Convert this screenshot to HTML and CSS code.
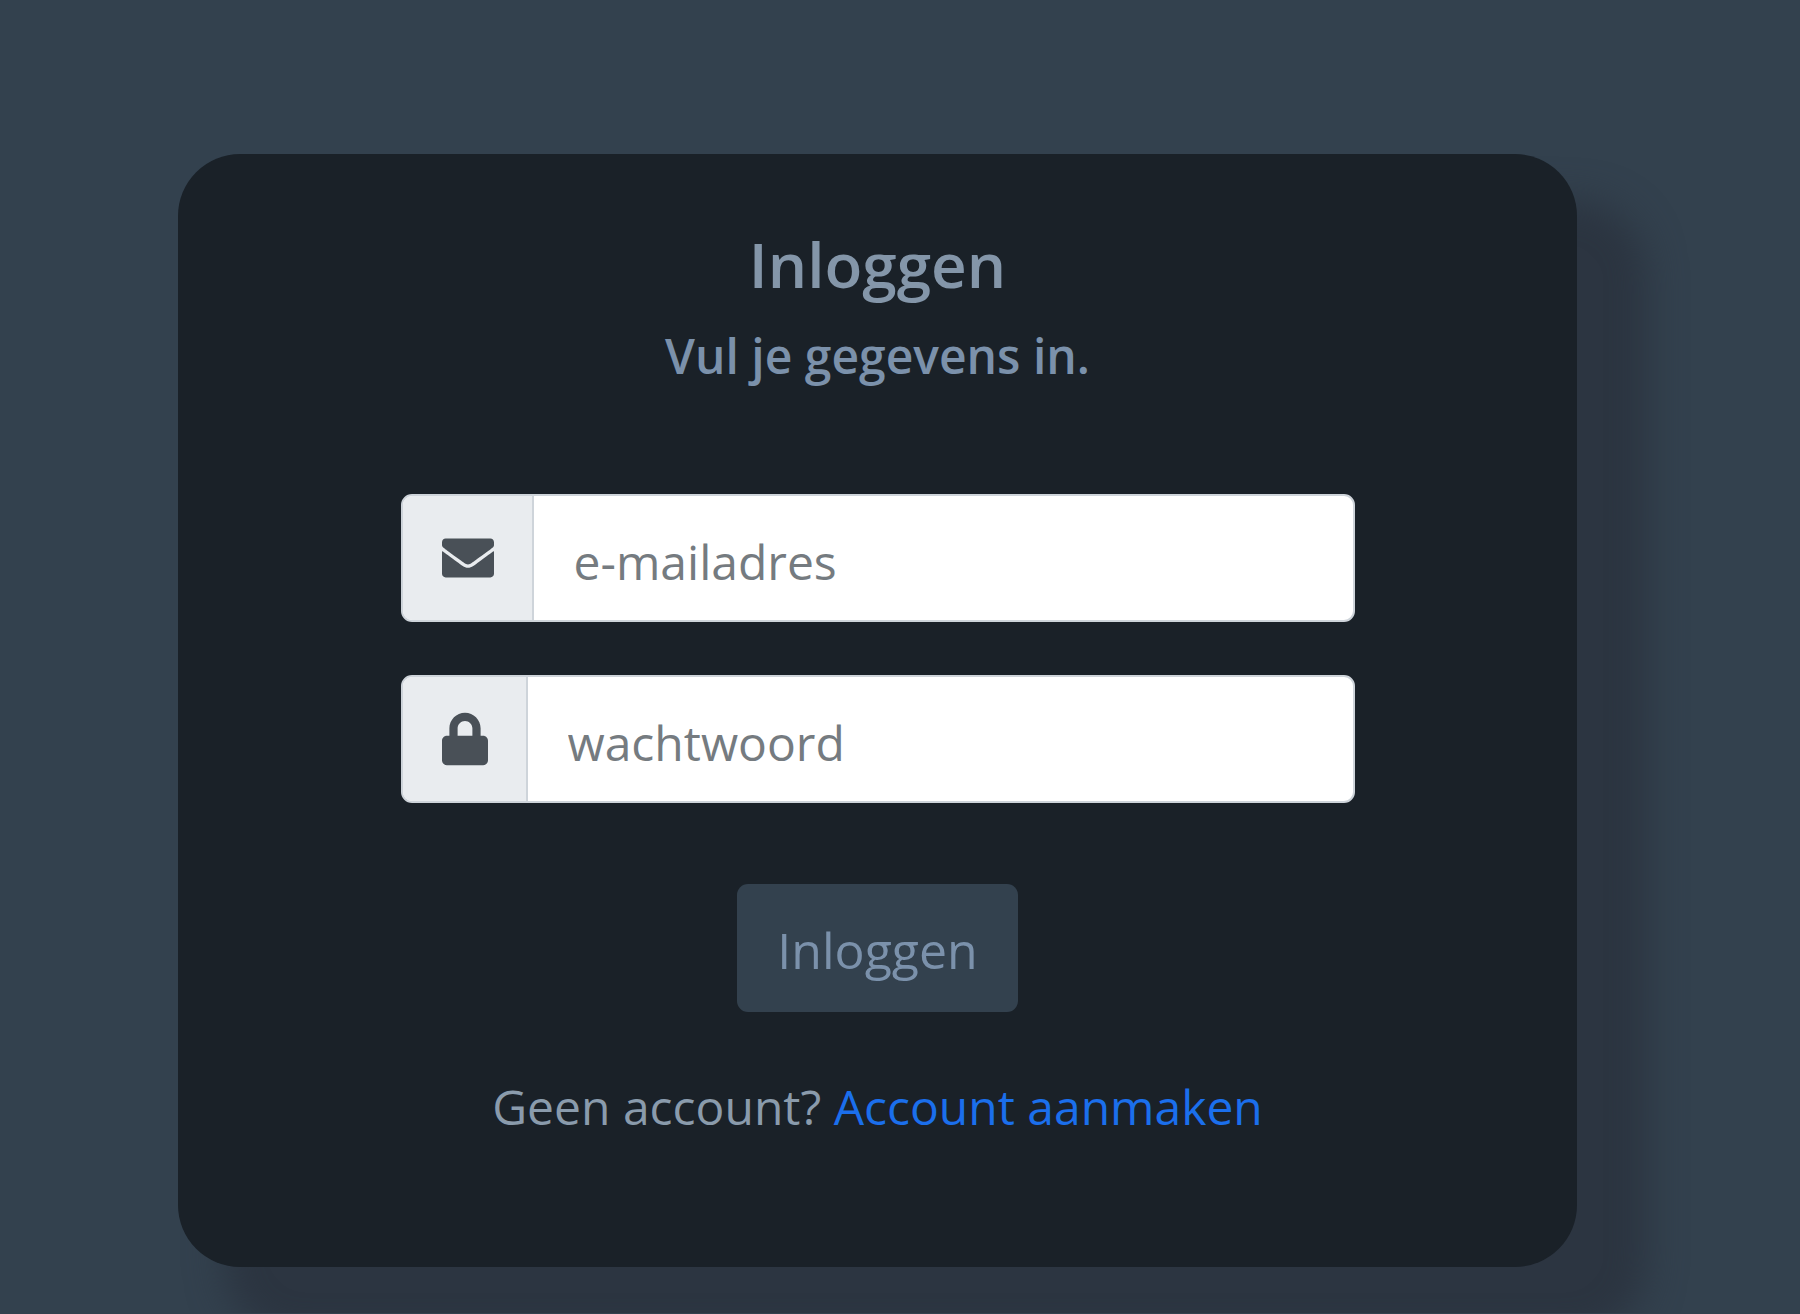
FILE: index.html
```html
<!DOCTYPE html>
<html lang="nl">
<head>
<meta charset="utf-8">
<meta name="viewport" content="width=device-width, initial-scale=1">
<title>Inloggen</title>
<link rel="stylesheet" href="styles.css">
</head>
<body>
<main class="card">
  <header class="card-header">
    <h1 class="title">Inloggen</h1>
    <h2 class="subtitle">Vul je gegevens in.</h2>
  </header>
  <form class="form">
    <div class="input-group">
      <label class="addon" for="email" aria-label="e-mailadres">
        <svg class="icon" viewBox="0 0 512 512" width="52" height="54" aria-hidden="true"><path d="M502.300 190.800c3.900-3.100 9.700-.2 9.700 4.700V412c0 20-16 36-36 36H36c-20 0-36-16-36-36V195.600c0-5 5.700-7.800 9.700-4.700 22.400 17.400 52.100 39.500 154.100 113.600 21.100 15.400 56.700 47.800 92.200 47.600 35.700.3 72-32.800 92.300-47.600 102-74.100 131.600-96.300 154-113.700zM256 320c23.200.4 56.600-29.200 73.400-41.400 132.700-96.300 142.800-104.700 173.400-128.700 5.800-4.500 9.200-11.500 9.200-18.900v-31c0-20-16-36-36-36H36c-20 0-36 16-36 36v31c0 7.400 3.400 14.300 9.200 18.900 30.600 23.900 40.700 32.400 173.400 128.700 16.800 12.200 50.200 41.800 73.400 41.400z"/></svg>
      </label>
      <input class="field" id="email" type="email" placeholder="e-mailadres">
    </div>
    <div class="input-group">
      <label class="addon" for="password" aria-label="wachtwoord">
        <svg class="icon" viewBox="0 0 448 512" width="46" height="54" aria-hidden="true"><path d="M400 224h-24v-72C376 68.200 307.800 0 224 0S72 68.200 72 152v72H48c-26.500 0-48 21.500-48 48v192c0 26.500 21.500 48 48 48h352c26.500 0 48-21.500 48-48V272c0-26.500-21.500-48-48-48zm-104 0H152v-72c0-39.700 32.300-72 72-72s72 32.300 72 72v72z"/></svg>
      </label>
      <input class="field" id="password" type="password" placeholder="wachtwoord">
    </div>
    <button class="submit" type="submit">Inloggen</button>
  </form>
  <p class="signup">Geen account? <a class="signup-link" href="#">Account aanmaken</a></p>
</main>
</body>
</html>
```
FILE: styles.css
```css
* {
  box-sizing: border-box;
}

body {
  margin: 0;
  padding: 154px 223px 46px 178px;
  background: #33414e;
  color: #8a9bac;
  font-family: "Open Sans", "Noto Sans", sans-serif;
  font-size: 48px;
  line-height: 80px;
}

.card {
  padding: 68px 48px 120px;
  border-radius: 62px;
  background: #1a2128;
  box-shadow: 58px 58px 36px 12px #2c3541;
  text-align: center;
}

.title,
.subtitle {
  margin: 0;
  font-weight: 600;
}

.title {
  font-size: 62px;
  line-height: 84px;
  color: #8496a9;
}

.subtitle {
  font-size: 48px;
  line-height: 100px;
  color: #7b91ab;
}

.form {
  display: flex;
  flex-direction: column;
  align-items: center;
  gap: 53px;
  max-width: 954px;
  margin: 88px auto 0;
}

.input-group {
  display: flex;
  width: 100%;
  height: 128px;
  border: 2px solid #ced4da;
  border-radius: 11px;
  background: #fff;
  overflow: hidden;
}

.addon {
  display: flex;
  align-items: center;
  padding: 0 38px 0 39px;
  border-right: 2px solid #ced4da;
  background: #e9ecef;
}

.icon {
  display: block;
  fill: #495057;
}

.field {
  flex: 1;
  min-width: 0;
  padding: 8px 40px 0;
  border: 0;
  outline: 0;
  background: transparent;
  color: #495057;
  font: inherit;
}

.field::placeholder {
  color: #757b80;
  opacity: 1;
}

.submit {
  height: 128px;
  margin-top: 28px;
  padding: 4px 40px 0;
  border: 0;
  border-radius: 11px;
  background: #33414e;
  color: #7b91ab;
  font: inherit;
  font-size: 50px;
}

.signup {
  margin: 55px 0 0;
}

.signup-link {
  color: #1b6fec;
  text-decoration: none;
}
```
